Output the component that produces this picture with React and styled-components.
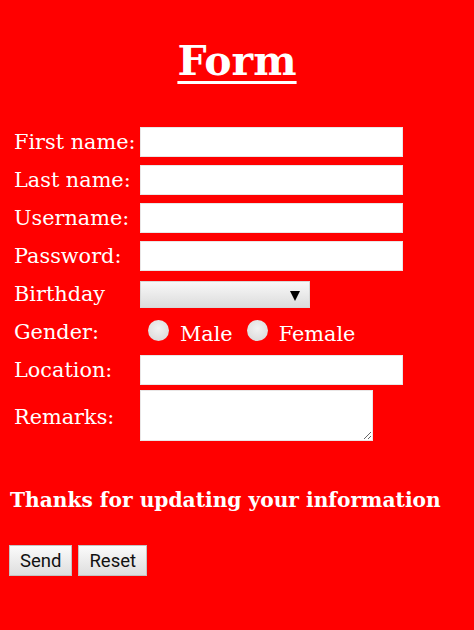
import React from 'react';
import styled, { createGlobalStyle } from 'styled-components';

const GlobalStyle = createGlobalStyle`
  html, body {
    margin: 0;
    padding: 0;
    background: #ff0000;
  }
  body {
    font-family: "DejaVu Serif", "Liberation Serif", serif;
    color: #fff;
  }
`;

const Page = styled.div`
  min-height: 630px;
  padding: 37px 9px 0 9px;
  box-sizing: border-box;
`;

const Title = styled.h1`
  margin: 0 0 42px;
  text-align: center;
  font-size: 41px;
  font-weight: bold;
  text-decoration: underline;
  text-decoration-thickness: 3px;
  text-underline-offset: 6px;
  line-height: 48px;
`;

const Fields = styled.div`
  display: grid;
  grid-template-columns: 126px 1fr;
  row-gap: 8px;
  padding-left: 5px;
  align-items: center;
`;

const Label = styled.label`
  font-size: 20.8px;
  line-height: 30px;
  white-space: nowrap;
`;

const TextInput = styled.input`
  box-sizing: border-box;
  width: 263px;
  height: 30px;
  margin: 0;
  border: 1px solid #e9e6e6;
  background: #fff;
  outline: none;
`;

const TextArea = styled.textarea`
  box-sizing: border-box;
  width: 233px;
  height: 51px;
  margin: -3px 0 0;
  border: 1px solid #e9e6e6;
  background: #fff;
  resize: both;
  display: block;
`;

const SelectBox = styled.div`
  position: relative;
  box-sizing: border-box;
  width: 170px;
  height: 27px;
  margin: 2px 0 1px;
  background: linear-gradient(#f8f8f8, #dcdcdc);
  border: 1px solid #d8d8d8;

  &::after {
    content: "";
    position: absolute;
    right: 9px;
    top: 9px;
    border-left: 5px solid transparent;
    border-right: 5px solid transparent;
    border-top: 10px solid #000;
  }
`;

const RadioGroup = styled.div`
  display: flex;
  align-items: center;
  padding-left: 8px;
  height: 30px;
`;

const Radio = styled.span`
  display: inline-block;
  width: 21px;
  height: 21px;
  border-radius: 50%;
  background: radial-gradient(circle at 50% 40%, #f2f2f2, #d6d6d6);
  margin-right: 11px;
  margin-top: -4px;
`;

const RadioText = styled.span`
  font-size: 20.8px;
  margin-right: 14px;
  margin-top: 3px;
`;

const Thanks = styled.h3`
  margin: 44px 0 0 1px;
  font-size: 20.2px;
  font-weight: bold;
  line-height: 30px;
`;

const Buttons = styled.div`
  display: flex;
  gap: 6px;
  margin-top: 30px;
`;

const Button = styled.button`
  box-sizing: border-box;
  height: 31px;
  padding: 0 10px;
  font-family: Roboto, "Liberation Sans", sans-serif;
  font-size: 18.5px;
  color: #111;
  background: linear-gradient(#fbfbfb, #dedede);
  border: 1px solid #c4c4c4;
  border-radius: 0;
`;

export default function App() {
  return (
    <Page>
      <GlobalStyle />
      <Title>Form</Title>
      <Fields>
        <Label>First name:</Label>
        <TextInput type="text" />
        <Label>Last name:</Label>
        <TextInput type="text" />
        <Label>Username:</Label>
        <TextInput type="text" />
        <Label>Password:</Label>
        <TextInput type="password" />
        <Label>Birthday</Label>
        <SelectBox />
        <Label>Gender:</Label>
        <RadioGroup>
          <Radio />
          <RadioText>Male</RadioText>
          <Radio />
          <RadioText>Female</RadioText>
        </RadioGroup>
        <Label>Location:</Label>
        <TextInput type="text" />
        <Label>Remarks:</Label>
        <TextArea />
      </Fields>
      <Thanks>Thanks for updating your information</Thanks>
      <Buttons>
        <Button>Send</Button>
        <Button>Reset</Button>
      </Buttons>
    </Page>
  );
}
